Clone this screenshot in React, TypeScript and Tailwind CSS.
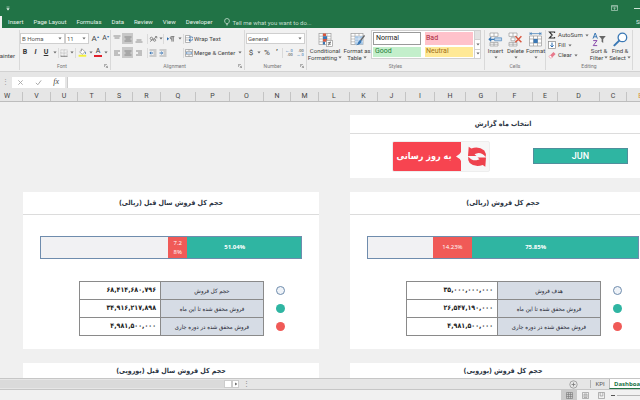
import React from 'react';
import { twMerge } from 'tailwind-merge';

interface ReportRow {
  label: string;
  value: string;
}

interface ReportProps {
  title: string;
  achieved: number;
  period: number;
  rows: ReportRow[];
}

const MENU = ['Insert', 'Page Layout', 'Formulas', 'Data', 'Review', 'View', 'Developer'];

const COLUMNS: [string, string][] = [
  ['W', 'w-[23px] pr-2'],
  ['V', 'w-7'],
  ['U', 'w-[27px]'],
  ['T', 'w-7'],
  ['S', 'w-[27px]'],
  ['R', 'w-7'],
  ['Q', 'w-[35px]'],
  ['P', 'w-[34px]'],
  ['O', 'w-[34px]'],
  ['N', 'w-[27px]'],
  ['M', 'w-7'],
  ['L', 'w-[31px]'],
  ['K', 'w-7'],
  ['J', 'w-7'],
  ['I', 'w-[29px]'],
  ['H', 'w-[31px]'],
  ['G', 'w-[31px]'],
  ['F', 'w-9'],
  ['E', 'w-[25px]'],
  ['D', 'w-[42px]'],
  ['C', 'w-[27px]'],
];

const DOTS = ['bg-[#eff3f8] border border-[#6f8cad]', 'bg-[#2fb5a2]', 'bg-[#f05a57]'];

const Caret = () => (
  <svg viewBox="0 0 4 3" className="h-[3px] w-1 shrink-0">
    <path d="M0.4 0.5h3.2L2 2.4z" fill="#666" />
  </svg>
);

const Sep = () => <span className="h-[10px] w-px shrink-0 bg-[#dadada]" />;

const Tool: React.FC<{ label: string; className?: string; children: React.ReactNode }> = ({
  label,
  className,
  children,
}) => (
  <button
    type="button"
    aria-label={label}
    className={twMerge('flex h-[11px] shrink-0 items-center justify-center whitespace-nowrap leading-none', className)}
  >
    {children}
  </button>
);

const Lines: React.FC<{ d: string }> = ({ d }) => (
  <svg viewBox="0 0 8 8" className="size-2">
    <path d={d} stroke="#777" strokeWidth="0.8" fill="none" />
  </svg>
);

const Group: React.FC<{
  name: string;
  className: string;
  launcher?: boolean;
  children: React.ReactNode;
}> = ({ name, className, launcher, children }) => (
  <section className={twMerge('flex shrink-0 flex-col border-r border-[#d9d9d9]', className)}>
    <div className="flex-1">{children}</div>
    <div className="flex h-2 items-center text-[5px] leading-none text-[#777]">
      <span className="flex-1 text-center">{name}</span>
      {launcher && (
        <svg viewBox="0 0 4 4" className="mr-[2px] size-1">
          <path d="M0.4 3V0.4H3M1.5 1.5l2 2M3.6 1.8v1.8H1.8" stroke="#777" strokeWidth="0.6" fill="none" />
        </svg>
      )}
    </div>
  </section>
);

const BigTool: React.FC<{ icon: React.ReactNode; lines: string[]; className: string }> = ({
  icon,
  lines,
  className,
}) => (
  <button
    type="button"
    className={twMerge('flex flex-col items-center pt-px text-[6px] leading-[7px] text-[#444]', className)}
  >
    <span className="flex h-4 items-center justify-center">{icon}</span>
    <span className="whitespace-nowrap">{lines[0]}</span>
    <span className="flex h-[7px] items-center gap-px whitespace-nowrap">
      {lines[1]}
      <Caret />
    </span>
  </button>
);

const Picker: React.FC<{ label: string; value: string; className: string }> = ({ label, value, className }) => (
  <div className={twMerge('relative flex h-[11px] items-center border border-[#cfcfcf] bg-white', className)}>
    <select
      aria-label={label}
      className="h-full w-full appearance-none bg-transparent pl-px text-[6px] leading-none text-[#555]"
    >
      <option>{value}</option>
    </select>
    <span className="pointer-events-none absolute right-[2px] flex">
      <Caret />
    </span>
  </div>
);

const SheetIcon: React.FC<{ children?: React.ReactNode }> = ({ children }) => (
  <svg viewBox="0 0 15 15" className="size-[15px]">
    <rect x="1" y="1.5" width="12" height="11" fill="#fff" stroke="#9a9a9a" strokeWidth="0.7" />
    <path d="M1 4.2h12M1 7h12M1 9.8h12M5 1.5v11M9 1.5v11" stroke="#9a9a9a" strokeWidth="0.6" />
    {children}
  </svg>
);

const FontGroup = () => (
  <Group name="Font" className="w-[91px]" launcher>
    <div className="flex h-[14px] items-end">
      <Picker label="Font" value="B Homa" className="w-[45px]" />
      <Picker label="Font size" value="11" className="w-6" />
      <Tool label="Increase font size" className="w-3 text-[8px] text-[#444]">
        A<span className="mb-1 text-[4px] text-[#2b6cb0]">▴</span>
      </Tool>
      <Tool label="Decrease font size" className="w-[9px] text-[7px] text-[#444]">
        A<span className="mb-1 text-[4px] text-[#2b6cb0]">▾</span>
      </Tool>
    </div>
    <div className="mt-[3px] flex items-center text-[7px] text-[#333]">
      <Tool label="Bold" className="w-[10px] font-bold">B</Tool>
      <Tool label="Italic" className="w-[11px] font-bold italic">I</Tool>
      <Tool label="Underline" className="w-[10px] font-bold underline">U</Tool>
      <Tool label="Underline style" className="w-[7px]"><Caret /></Tool>
      <Sep />
      <Tool label="Borders" className="w-[10px]">
        <svg viewBox="0 0 8 8" className="size-2">
          <path d="M0.8 0.8h6.4v6.4H0.8zM4 0.8v6.4M0.8 4h6.4" stroke="#aaa" strokeWidth="0.6" fill="none" strokeDasharray="1 0.5" />
          <path d="M0.5 7.3h7" stroke="#666" strokeWidth="0.7" />
        </svg>
      </Tool>
      <Tool label="Border style" className="w-[6px]"><Caret /></Tool>
      <Sep />
      <Tool label="Fill color" className="w-3">
        <svg viewBox="0 0 9 9" className="size-[9px]">
          <path d="M1.6 3.8L4.4 1.2l2.6 2.6L4.2 6.4z" fill="#fff" stroke="#777" strokeWidth="0.6" />
          <path d="M3.4 0.6v2.8" stroke="#777" strokeWidth="0.6" />
          <path d="M7.2 3.6q1.4 1.6 0.4 2.6q-0.9-0.2-0.4-2.6z" fill="#2b6cb0" />
          <rect x="0.6" y="6.8" width="7.6" height="1.9" fill="#f4f13a" />
        </svg>
      </Tool>
      <Tool label="Fill palette" className="w-[5px]"><Caret /></Tool>
      <Tool label="Font color" className="w-[10px]">
        <span className="border-b-2 border-[#e0202a] px-[2px] text-[7px] leading-[7px]">A</span>
      </Tool>
      <Tool label="Font palette" className="w-[6px]"><Caret /></Tool>
    </div>
  </Group>
);

const AlignmentGroup = () => (
  <Group name="Alignment" className="w-[134px]" launcher>
    <div className="flex h-[14px] items-end pl-px text-[6px] text-[#444]">
      <Tool label="Top align" className="w-[10px]"><Lines d="M0.5 1h7M1.5 3h5" /></Tool>
      <Tool label="Middle align" className="w-[11px] bg-[#c8c8c8]"><Lines d="M0.5 2h7M1.5 4h5M0.5 6h7" /></Tool>
      <Tool label="Bottom align" className="w-[11px]"><Lines d="M1.5 5h5M0.5 7h7" /></Tool>
      <span className="flex h-[11px] w-1 items-center justify-end"><Sep /></span>
      <Tool label="Orientation" className="w-[10px]">
        <svg viewBox="0 0 9 8" className="h-2 w-[9px]">
          <path d="M1 6.6L7.6 1.8M6 1.6h1.8v1.8" stroke="#666" strokeWidth="0.7" fill="none" />
          <circle cx="2.4" cy="3.4" r="1.2" fill="none" stroke="#666" strokeWidth="0.7" />
          <circle cx="5.6" cy="5.2" r="1.1" fill="none" stroke="#666" strokeWidth="0.7" />
        </svg>
      </Tool>
      <Tool label="Orientation options" className="w-[5px]"><Caret /></Tool>
      <Sep />
      <Tool label="Text direction" className="w-3">
        <svg viewBox="0 0 9 8" className="h-2 w-[9px]">
          <path d="M1 2.2l2.2 1.6L1 5.4z" fill="#2b6cb0" />
          <path d="M8.4 1.6H5.4a1.1 1.1 0 0 0 0 2.4h0.5M5.9 1.6v5M7.3 1.6v5" stroke="#555" strokeWidth="0.7" fill="none" />
        </svg>
      </Tool>
      <Tool label="Direction options" className="w-[7px]"><Caret /></Tool>
      <Sep />
      <Tool label="Wrap Text" className="ml-px gap-px">
        <svg viewBox="0 0 8 8" className="size-2">
          <path d="M0.5 0.5h4.6v7H0.5zM0.5 2.8h4.6M0.5 5h4.6" fill="#fff" stroke="#888" strokeWidth="0.6" />
          <path d="M4 2h2.6a1.5 1.5 0 0 1 0 3.2H4.2M5.4 3.9L4 5.2l1.4 1.3" fill="none" stroke="#2b6cb0" strokeWidth="0.8" />
        </svg>
        Wrap Text
      </Tool>
    </div>
    <div className="mt-[3px] flex items-center pl-px text-[6px] text-[#444]">
      <Tool label="Align left" className="w-[10px]"><Lines d="M1 2h6M1 4h4M1 6h6" /></Tool>
      <Tool label="Center" className="w-[11px] bg-[#c8c8c8]"><Lines d="M0.5 2h7M1.5 4h5M0.5 6h7" /></Tool>
      <Tool label="Align right" className="w-[11px]"><Lines d="M1 2h6M3 4h4M1 6h6" /></Tool>
      <span className="flex w-1 justify-end"><Sep /></span>
      <Tool label="Decrease indent" className="w-[10px]">
        <svg viewBox="0 0 8 8" className="size-2">
          <path d="M0.5 1h7M4.5 3h3M4.5 5h3M0.5 7h7" stroke="#888" strokeWidth="0.7" />
          <path d="M4 4H1M2.2 2.7L0.8 4l1.4 1.3" stroke="#2b6cb0" strokeWidth="0.9" fill="none" />
        </svg>
      </Tool>
      <Tool label="Increase indent" className="w-[10px]">
        <svg viewBox="0 0 8 8" className="size-2">
          <path d="M0.5 1h7M4.5 3h3M4.5 5h3M0.5 7h7" stroke="#888" strokeWidth="0.7" />
          <path d="M0.5 4h3M2.3 2.7L3.7 4 2.3 5.3" stroke="#2b6cb0" strokeWidth="0.9" fill="none" />
        </svg>
      </Tool>
      <span className="flex w-4 justify-end"><Sep /></span>
      <Tool label="Merge & Center" className="ml-px gap-px">
        <svg viewBox="0 0 8 8" className="size-2">
          <path d="M0.5 0.5h7v7h-7zM0.5 2.4h7M0.5 5.6h7M4 0.5v1.9M4 5.6v1.9" fill="#fff" stroke="#888" strokeWidth="0.6" />
          <path d="M1.2 4h5.6M2.2 3.2L1.2 4l1 0.8M5.8 3.2l1 0.8-1 0.8" fill="none" stroke="#2b6cb0" strokeWidth="0.6" />
        </svg>
        Merge &amp; Center
        <span className="ml-[2px] flex">
          <Caret />
        </span>
      </Tool>
    </div>
  </Group>
);

const Decimals: React.FC<{ top: string; bottom: string; left?: boolean }> = ({ top, bottom, left }) => (
  <span className="flex flex-col items-end text-[4px] leading-[4px]">
    <span className={left ? 'text-[#2b6cb0]' : ''}>{top}</span>
    <span className={left ? '' : 'text-[#2b6cb0]'}>{bottom}</span>
  </span>
);

const NumberGroup = () => (
  <Group name="Number" className="w-[62px]" launcher>
    <div className="flex h-[14px] items-end px-px">
      <Picker label="Number format" value="General" className="w-full" />
    </div>
    <div className="mt-[3px] flex items-center pl-px text-[8px] text-[#444]">
      <Tool label="Currency" className="w-[10px]">$</Tool>
      <Tool label="Currency options" className="w-[6px]"><Caret /></Tool>
      <Tool label="Percent" className="w-[10px]">%</Tool>
      <Tool label="Comma style" className="w-[10px] font-bold">’</Tool>
      <Sep />
      <Tool label="Increase decimal" className="w-3"><Decimals top="←.0" bottom=".00" left /></Tool>
      <Tool label="Decrease decimal" className="w-[10px]"><Decimals top=".00" bottom="→.0" /></Tool>
    </div>
  </Group>
);

const StylesGroup = () => (
  <Group name="Styles" className="w-[178px]">
    <div className="flex items-start">
      <BigTool
        className="w-9"
        lines={['Conditional', 'Formatting']}
        icon={
          <SheetIcon>
            <path d="M5 1.5h3v2.7H5zM5 7h4v2.8H5z" fill="#d9573f" />
            <path d="M5 4.2h4V7H5zM5 9.8h2v2.7H5z" fill="#3a78b5" />
            <rect x="8.4" y="8.4" width="6" height="6" fill="#fff" stroke="#888" strokeWidth="0.6" />
            <path d="M9.8 10.6h3.2M9.8 12.2h3.2M12.4 9.4l-2 4" stroke="#444" strokeWidth="0.6" />
          </SheetIcon>
        }
      />
      <BigTool
        className="w-7"
        lines={['Format as', 'Table']}
        icon={
          <SheetIcon>
            <path d="M5 4.2h8v8.3H5z" fill="#a9c8e6" />
            <path d="M5 7h8M5 9.8h8M9 4.2v8.3" stroke="#fff" strokeWidth="0.5" />
            <path d="M14.5 3.4L10.6 8.6" stroke="#666" strokeWidth="1.4" />
            <path d="M10.8 8q1.2 1 0.4 2.6q-1.6 2.6-5 2.6q2-1.4 2-3.2q1-2 2.6-2z" fill="#3a78b5" />
          </SheetIcon>
        }
      />
      <div className="flex h-[29px] border border-[#d0d0d0] bg-white text-[7px] leading-none">
        <div className="grid w-[102px] grid-cols-2 gap-x-1 gap-y-[2px] p-px">
          <button type="button" className="border border-[#9a9a9a] bg-white pl-[2px] text-left text-[#222]">Normal</button>
          <button type="button" className="bg-[#ffc2cb] pl-px text-left text-[#a8273a]">Bad</button>
          <button type="button" className="bg-[#c3efcb] pl-[2px] text-left text-[#1e7b35]">Good</button>
          <button type="button" className="bg-[#ffe996] pl-px text-left text-[#a0701c]">Neutral</button>
        </div>
        <div className="flex w-[6px] flex-col divide-y divide-[#d0d0d0] border-l border-[#d0d0d0]">
          <Tool label="Previous styles" className="h-auto flex-1 bg-[#e3e3e3]"><span /></Tool>
          <Tool label="Next styles" className="h-auto flex-1"><Caret /></Tool>
          <Tool label="More styles" className="h-auto flex-1"><Caret /></Tool>
        </div>
      </div>
    </div>
  </Group>
);

const CellsGroup = () => (
  <Group name="Cells" className="w-[61px]">
    <div className="flex pl-px">
      <BigTool
        className="w-[19px]"
        lines={['Insert']}
        icon={
          <svg viewBox="0 0 15 15" className="size-[15px]">
            <path d="M2 1h8v3.4H2zM6 1v3.4M2 10.4h8v3.6H2zM6 10.4V14M2 12.2h8" fill="#fff" stroke="#999" strokeWidth="0.7" />
            <path d="M6.6 5.8h7v3h-7z" fill="#bdd4ea" stroke="#3a78b5" strokeWidth="0.6" />
            <path d="M6.4 7.3H1.4M3.2 5.4L1.2 7.3l2 1.9" stroke="#3a78b5" strokeWidth="1.2" fill="none" />
          </svg>
        }
      />
      <BigTool
        className="w-[21px]"
        lines={['Delete']}
        icon={
          <svg viewBox="0 0 15 15" className="size-[15px]">
            <path d="M1 1h8v3.4H1zM5 1v3.4M1 10.4h8v3.6H1zM5 10.4V14M1 12.2h8M3 5.8h4v3H3z" fill="#fff" stroke="#999" strokeWidth="0.7" />
            <path d="M7.4 4.2l6 6M13.4 4.2l-6 6" stroke="#d9573f" strokeWidth="1.5" />
          </svg>
        }
      />
      <BigTool
        className="w-[19px]"
        lines={['Format']}
        icon={
          <svg viewBox="0 0 15 15" className="size-[15px]">
            <path d="M1.5 4h12v10h-12zM1.5 7h12M1.5 11h12M5.5 4v10M9.5 4v10" fill="#fff" stroke="#999" strokeWidth="0.7" />
            <rect x="5.5" y="7" width="4.2" height="4" fill="#3a78b5" />
            <path d="M2 1.6h11M2 0.3v2.6M13 0.3v2.6M4 0.6L2.6 1.6 4 2.6M11 0.6l1.4 1-1.4 1" stroke="#3a78b5" strokeWidth="0.7" fill="none" />
          </svg>
        }
      />
    </div>
  </Group>
);

const EditingGroup = () => (
  <Group name="Editing" className="w-[87px]">
    <div className="flex text-[6px] text-[#444]">
      <div className="flex w-[42px] flex-col items-start pl-[2px]">
        <Tool label="AutoSum" className="h-[10px] gap-[2px]">
          <svg viewBox="0 0 8 8" className="size-2">
            <path d="M6.6 2V1H1.4l2.8 3-2.8 3h5.2V6" fill="none" stroke="#333" strokeWidth="1.1" />
          </svg>
          AutoSum
          <Caret />
        </Tool>
        <Tool label="Fill" className="h-[10px] gap-[2px]">
          <svg viewBox="0 0 8 8" className="size-2">
            <rect x="0.6" y="0.6" width="6.8" height="6.8" fill="#fff" stroke="#888" strokeWidth="0.7" />
            <path d="M4 1.6v4.4M2.4 4.4L4 6l1.6-1.6" fill="none" stroke="#2b6cb0" strokeWidth="1" />
          </svg>
          Fill
          <Caret />
        </Tool>
        <Tool label="Clear" className="h-[10px] gap-[2px]">
          <svg viewBox="0 0 8 8" className="size-2">
            <path d="M2.2 4.2L5.4 0.9 7.6 3 4.4 6.2z" fill="#e8798c" />
            <path d="M2.2 4.2L0.9 5.5l1.4 1.4h1.4l0.7-0.7z" fill="#fff" stroke="#e8798c" strokeWidth="0.6" />
          </svg>
          Clear
          <Caret />
        </Tool>
      </div>
      <BigTool
        className="w-[22px]"
        lines={['Sort &', 'Filter']}
        icon={
          <svg viewBox="0 0 16 15" className="h-[15px] w-4">
            <path d="M2 6.6L4.2 1l2.2 5.6M2.8 4.8h2.8" fill="none" stroke="#3a78b5" strokeWidth="1" />
            <path d="M2.2 8.6h3.8l-3.8 5h4" fill="none" stroke="#8a4bab" strokeWidth="1" />
            <path d="M8 4h6.8l-2.6 3v4l-1.6-1.2V7z" fill="#666" />
          </svg>
        }
      />
      <BigTool
        className="w-5"
        lines={['Find &', 'Select']}
        icon={
          <svg viewBox="0 0 15 15" className="size-[15px]">
            <circle cx="9.4" cy="5.4" r="4.3" fill="#fff" stroke="#3a78b5" strokeWidth="1.3" />
            <path d="M6.2 8.6L1.4 13.4" stroke="#3a78b5" strokeWidth="2" strokeLinecap="round" />
          </svg>
        }
      />
    </div>
  </Group>
);

const TitleBar = () => (
  <header className="shrink-0 bg-[#217346] text-[6px] leading-none text-[#e6f2eb]">
    <div className="flex h-4 items-center pl-[6px]">
      <svg viewBox="0 0 4 5" className="h-[5px] w-1">
        <path d="M0.5 1h3M0.8 2.6h2.4L2 4.2z" stroke="#dcebe2" strokeWidth="0.6" fill="#dcebe2" />
      </svg>
      <svg viewBox="0 0 7 6" className="ml-auto h-[6px] w-[7px]">
        <path d="M0.5 0.5h6v5h-6zM0.5 1.8h6M3.5 4.8V2.8M2.6 3.6l0.9-0.9 0.9 0.9" stroke="#cfe3d7" strokeWidth="0.6" fill="none" />
      </svg>
      <span className="ml-4 h-px w-[6px] bg-[#cfe3d7]" />
    </div>
    <nav className="flex h-3 items-center whitespace-nowrap">
      <span className="h-full w-[2px] bg-[#f1f1f1]" />
      <div className="flex flex-1 items-center gap-[10px] pl-[6px]">
        {MENU.map((item) => (
          <a key={item} href="#">
            {item}
          </a>
        ))}
        <label className="flex flex-1 items-center gap-[2px] pl-[2px]">
          <svg viewBox="0 0 6 8" className="h-2 w-[6px]">
            <path d="M2 5.6Q0.6 4.2 0.6 2.9a2.4 2.4 0 0 1 4.8 0Q5.4 4.2 4 5.6zM2 6.8h2" stroke="#dcebe2" strokeWidth="0.7" fill="none" />
          </svg>
          <input
            aria-label="Tell me"
            placeholder="Tell me what you want to do..."
            className="w-28 bg-transparent placeholder:text-[#c6dfd0]"
          />
        </label>
      </div>
      <a href="#" className="w-1 overflow-hidden">Sign in</a>
    </nav>
  </header>
);

const FormulaBar = () => (
  <div className="flex h-[21px] shrink-0 items-center gap-[2px] border-t border-[#d2d2d2] bg-[#e6e6e6]">
    <span className="w-[10px] text-center text-[7px] leading-none text-[#999]">⋮</span>
    <div className="flex h-[11px] w-[53px] items-center justify-around bg-white">
      <Tool label="Cancel" className="w-2">
        <svg viewBox="0 0 8 8" className="size-[7px]">
          <path d="M1.5 1.5l5 5M6.5 1.5l-5 5" stroke="#a5a5a5" strokeWidth="1" />
        </svg>
      </Tool>
      <Tool label="Enter" className="w-2">
        <svg viewBox="0 0 8 8" className="size-[7px]">
          <path d="M1 4.4l2.2 2.2L7 1.6" stroke="#a5a5a5" strokeWidth="1.1" fill="none" />
        </svg>
      </Tool>
      <Tool label="Insert function" className="w-2 font-['Liberation_Serif',serif] text-[8px] italic text-[#444]">fx</Tool>
    </div>
    <input aria-label="Formula" className="h-[11px] min-w-0 flex-1 border-l border-[#ccc] bg-white text-[6px]" />
  </div>
);

const CardTitle: React.FC<{ children: React.ReactNode; className?: string }> = ({ children, className }) => (
  <h2
    dir="rtl"
    className={twMerge(
      "flex items-center justify-center border-b border-[#dcdcdc] font-['DejaVu_Sans_Condensed','DejaVu_Sans',sans-serif] text-[7px] font-bold leading-none text-[#2b3442]",
      className,
    )}
  >
    {children}
  </h2>
);

const MonthCard = () => (
  <article className="col-start-2 bg-white">
    <CardTitle className="h-[19px]">انتخاب ماه گزارش</CardTitle>
    <div className="flex h-11 items-center justify-between pl-[42px] pr-7">
      <button type="button" className="flex h-[31px] w-[98px] overflow-hidden rounded-[2px] border border-[#eee] bg-[#f7f7f7]">
        <span
          dir="rtl"
          className="flex h-full flex-1 items-center justify-center whitespace-nowrap bg-[#f74450] font-['DejaVu_Sans_Condensed','DejaVu_Sans',sans-serif] text-[9px] font-bold leading-none text-white"
        >
          به روز رسانی
        </span>
        <svg viewBox="0 0 34 29" className="h-[29px] w-[34px] shrink-0">
          <path d="M0 0H6V10Q5 12.500 1 14.500Q5 16.500 6 19V29H0z" fill="#f74450" />
          <path
            id="swirl"
            d="M13.7 4.7L16.3 6.500Q23.500 3.500 29.300 8.500Q31.500 11.500 30.700 15Q27 10.500 22.500 11.200Q20.500 11.500 19.500 12.200L21.500 14L13 14z"
            fill="#ee424d"
          />
          <use href="#swirl" transform="rotate(180 22 14.700)" />
        </svg>
      </button>
      <select
        aria-label="Month"
        className="h-4 w-[95px] appearance-none border border-[#4f8f9c] bg-[#2fb5a2] text-center text-[9px] font-medium leading-[14px] text-white [text-align-last:center]"
      >
        <option>JUN</option>
      </select>
    </div>
  </article>
);

const ReportCard: React.FC<ReportProps> = ({ title, achieved, period, rows }) => (
  <article className="bg-white pb-[13px]">
    <CardTitle className="h-[23px]">{title}</CardTitle>
    <div className="px-[17px] pt-[21px]">
      <div className="flex h-[23px] justify-end border border-[#6f8cad] bg-[#f1f1f3] font-['Open_Sans',sans-serif] text-[6px] leading-[9px] text-white">
        <div
          className="relative flex items-center justify-center bg-[#2fb5a2] font-bold"
          style={{ width: `${achieved}%` }}
        >
          {achieved}%
          <div
            className="absolute inset-y-0 left-0 flex items-center justify-center break-all bg-[#f05a57] px-1 text-center font-normal"
            style={{ width: `${(period / achieved) * 100}%` }}
          >
            {period}%
          </div>
        </div>
      </div>
    </div>
    <div className="mt-[22px] flex gap-3 pl-14 pr-[34px] font-['DejaVu_Sans_Condensed','DejaVu_Sans',sans-serif]">
      <table className="flex-1 border-collapse leading-none">
        <tbody>
          {rows.map((row) => (
            <tr key={row.label} className="h-[18px]">
              <td dir="rtl" className="border border-[#8a8a8a] pr-1 text-right text-[7px] font-bold text-[#222]">
                {row.value}
              </td>
              <th
                dir="rtl"
                scope="row"
                className="w-[103px] whitespace-nowrap border border-[#8a8a8a] bg-[#d6dce5] text-center text-[6px] font-medium text-[#1f2733]"
              >
                {row.label}
              </th>
            </tr>
          ))}
        </tbody>
      </table>
      <div className="flex flex-col justify-around">
        {DOTS.map((dot) => (
          <span key={dot} className={twMerge('size-[9px] rounded-full', dot)} />
        ))}
      </div>
    </div>
  </article>
);

const Dashboard = () => (
  <main className="-mr-4 grid grid-cols-[296fr_306fr] gap-x-[31px] gap-y-[14px] pl-[23px] pt-[13px]">
    <MonthCard />
    <ReportCard
      title="حجم کل فروش سال قبل (ریالی)"
      achieved={51.04}
      period={7.28}
      rows={[
        { label: 'حجم کل فروش', value: '۶۸,۴۱۴,۶۸۰,۷۹۶' },
        { label: 'فروش محقق شده تا این ماه', value: '۳۴,۹۱۶,۲۱۷,۸۹۸' },
        { label: 'فروش محقق شده در دوره جاری', value: '۴,۹۸۱,۵۰۰,۰۰۰' },
      ]}
    />
    <ReportCard
      title="حجم کل فروش (ریالی)"
      achieved={75.85}
      period={14.23}
      rows={[
        { label: 'هدف فروش', value: '۳۵,۰۰۰,۰۰۰,۰۰۰' },
        { label: 'فروش محقق شده تا این ماه', value: '۲۶,۵۴۷,۱۹۰,۰۰۰' },
        { label: 'فروش محقق شده در دوره جاری', value: '۴,۹۸۱,۵۰۰,۰۰۰' },
      ]}
    />
    <article className="bg-white pb-8">
      <CardTitle className="h-[18px]">حجم کل فروش سال قبل (یورویی)</CardTitle>
    </article>
    <article className="bg-white pb-8">
      <CardTitle className="h-[18px]">حجم کل فروش (یورویی)</CardTitle>
    </article>
  </main>
);

const SheetTabs = () => (
  <div className="flex h-3 shrink-0 items-center border-y border-[#c6c6c6] bg-[#e6e6e6] text-[6px] leading-none">
    <span className="h-[8px] w-[35%] bg-[#dadada]" />
    <span className="h-[8px] w-2 border border-[#ccc] bg-white" />
    <Tool label="Scroll right" className="h-[8px] w-[7px] border border-[#ccc] bg-white">
      <svg viewBox="0 0 4 4" className="size-1">
        <path d="M1.2 0.5l2 1.5-2 1.500z" fill="#555" />
      </svg>
    </Tool>
    <span className="ml-1 w-[6px] text-center text-[7px] text-[#888]">⋮</span>
    <Tool label="New sheet" className="ml-auto w-[10px]">
      <svg viewBox="0 0 9 9" className="size-[9px]">
        <circle cx="4.5" cy="4.5" r="3.7" fill="none" stroke="#888" strokeWidth="0.7" />
        <path d="M4.5 2.6v3.8M2.6 4.5h3.8" stroke="#777" strokeWidth="0.8" />
      </svg>
    </Tool>
    <span className="ml-3 h-2 w-px bg-[#b5b5b5]" />
    <a href="#" className="w-[18px] text-center text-[#555]">KPI</a>
    <a
      href="#"
      className="flex h-full w-[31px] items-center overflow-hidden border-b border-l border-b-[#217346] border-l-[#bbb] bg-white pl-1 font-['Open_Sans',sans-serif] font-bold text-[#217346]"
    >
      Dashboard
    </a>
  </div>
);

const StatusBar = () => (
  <footer className="flex h-[10px] shrink-0 items-center justify-end bg-[#f1f1f1]">
    <Tool label="Normal view" className="h-full w-4 bg-[#cbcbcb]">
      <svg viewBox="0 0 7 7" className="size-[7px]">
        <path d="M0.5 0.5h6v6h-6zM0.5 2.5h6M0.5 4.500h6M2.500 0.5v6M4.500 0.5v6" stroke="#777" strokeWidth="0.6" fill="none" />
      </svg>
    </Tool>
    <Tool label="Page layout view" className="h-full w-4">
      <svg viewBox="0 0 7 7" className="size-[7px]">
        <path d="M0.5 0.5h6v6h-6zM2 2h3v3.500H2zM2.500 3h2M2.500 4.200h2" stroke="#888" strokeWidth="0.6" fill="none" />
      </svg>
    </Tool>
    <Tool label="Page break view" className="h-full w-4">
      <svg viewBox="0 0 7 7" className="size-[7px]">
        <path d="M0.5 0.5h6v6h-6zM2.200 0.5v3.500h2.600V0.500" stroke="#888" strokeWidth="0.6" fill="none" />
      </svg>
    </Tool>
    <Tool label="Zoom out" className="h-full w-2">
      <span className="h-px w-1 bg-[#555]" />
    </Tool>
    <span className="h-px w-[23px] bg-[#b5b5b5]" />
  </footer>
);

export default function App() {
  return (
    <div className="flex h-screen flex-col overflow-hidden bg-[#f0f0f0] font-['Roboto','Noto_Sans',sans-serif]">
      <TitleBar />
      <div className="flex h-[43px] shrink-0 overflow-hidden bg-[#f1f1f1] pb-px pt-[2px]">
        <section className="flex w-5 shrink-0 justify-end overflow-hidden border-r border-[#d9d9d9] pr-1 pt-[23px] text-[6px] leading-none text-[#444]">
          <button type="button" className="self-start whitespace-nowrap">Format Painter</button>
        </section>
        <FontGroup />
        <AlignmentGroup />
        <NumberGroup />
        <StylesGroup />
        <CellsGroup />
        <EditingGroup />
      </div>
      <FormulaBar />
      <div className="flex h-[10px] shrink-0 border-b border-[#bdbdbd] bg-[#e6e6e6] text-center text-[7px] leading-[9px] text-[#444]">
        {COLUMNS.map(([name, width]) => (
          <span key={name} className={twMerge('shrink-0 border-r border-[#c4c4c4]', width)}>
            {name}
          </span>
        ))}
        <span className="w-[27px] shrink-0 text-[#d9932f]">B</span>
      </div>
      <div className="min-h-0 flex-1 overflow-hidden">
        <Dashboard />
      </div>
      <SheetTabs />
      <StatusBar />
    </div>
  );
}
